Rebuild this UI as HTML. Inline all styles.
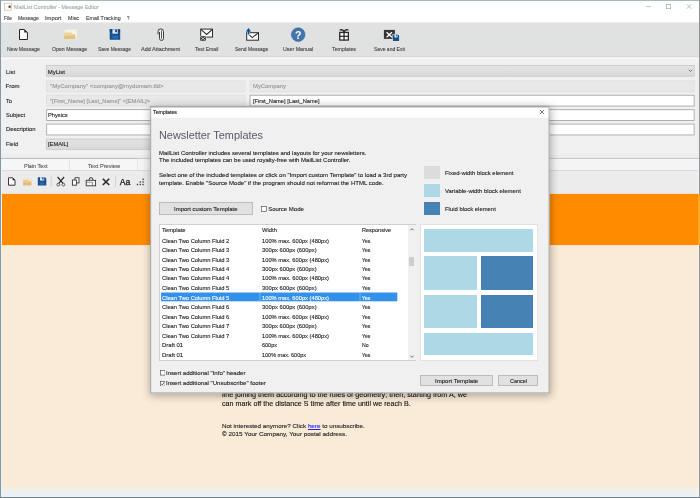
<!DOCTYPE html>
<html><head><meta charset="utf-8"><title>MailList Controller - Message Editor</title>
<style>
html,body{margin:0;padding:0}
body{width:700px;height:498px;overflow:hidden;background:#f0f0f0;font-family:"Liberation Sans",sans-serif}
#win{position:relative;width:700px;height:498px;overflow:hidden;background:#f0f0f0}
#win div,#win svg{position:absolute}
.ov{left:0;top:0;width:700px;height:498px;will-change:transform}
.t{-webkit-text-stroke:0.12px currentColor;position:absolute;white-space:nowrap;transform-origin:0 50%;display:block}
.inp{background:#fff;border:1px solid #a9a9a9;box-sizing:border-box}
.dis{background:#e6e6e6;border:1px solid #dcdcdc;box-sizing:border-box}
.cmb{background:#dedede;border:1px solid #c4c4c4;box-sizing:border-box}
.btn{background:#e1e1e1;border:1px solid #bcbcbc;box-sizing:border-box}
.cb{background:#fff;border:0.6px solid #444;box-sizing:border-box}
</style></head><body>
<div id="win">
<!-- backgrounds -->
<svg style="left:0;top:0" width="700" height="498" viewBox="0 0 700 498">
<rect x="0" y="0" width="700" height="22.6" fill="#fff"/>
<rect x="0" y="22.6" width="700" height="34.2" fill="#e0e1e1"/>
<rect x="0" y="56.6" width="700" height="0.8" fill="#cbcccc"/>
<rect x="0" y="57.4" width="700" height="1.4" fill="#f7f7f7"/>
<rect x="0" y="155.2" width="700" height="0.6" fill="#e7e7e7"/>
<rect x="0" y="157.9" width="700" height="0.9" fill="#a2a2a2"/>
<rect x="0" y="158.8" width="700" height="11.2" fill="#f5f6f8"/>
<rect x="137.3" y="158.8" width="562.7" height="11.2" fill="#f3f4f5"/>
<rect x="69" y="159" width="0.7" height="11" fill="#dcdcdc"/>
<rect x="137" y="159" width="0.7" height="11" fill="#dcdcdc"/>
<rect x="0" y="170" width="700" height="0.8" fill="#d3d3d3"/>
<rect x="0" y="170.8" width="700" height="23.4" fill="#ececed"/>
<rect x="0" y="193.9" width="700" height="51.4" fill="#ff8c00"/>
<rect x="0" y="245.3" width="700" height="243.6" fill="#faebd7"/>
<rect x="0" y="488.9" width="700" height="9.1" fill="#eef1f1"/>
</svg>
<!-- form fields -->
<svg style="left:0;top:0" width="700" height="160" viewBox="0 0 700 160">
<defs><linearGradient id="cg" x1="0" y1="0" x2="0" y2="1"><stop offset="0" stop-color="#e3e3e3"/><stop offset="1" stop-color="#d9d9d9"/></linearGradient></defs>
<rect x="46.60" y="65.40" width="647.60" height="10.80" fill="url(#cg)" stroke="#c6c6c6" stroke-width="0.8"/>
<rect x="46.60" y="80.80" width="198.40" height="11.00" fill="#e8e8e8" stroke="#dedede" stroke-width="0.8"/>
<rect x="250.00" y="80.80" width="444.20" height="11.00" fill="#e8e8e8" stroke="#dedede" stroke-width="0.8"/>
<rect x="46.60" y="95.20" width="198.40" height="10.90" fill="#e8e8e8" stroke="#dedede" stroke-width="0.8"/>
<rect x="250.05" y="95.25" width="444.10" height="10.80" fill="#fff" stroke="#a8a8a8" stroke-width="0.9"/>
<rect x="46.65" y="109.65" width="647.50" height="10.80" fill="#fff" stroke="#a8a8a8" stroke-width="0.9"/>
<rect x="46.65" y="124.05" width="647.50" height="10.90" fill="#fff" stroke="#a8a8a8" stroke-width="0.9"/>
<rect x="46.60" y="139.00" width="199.00" height="10.40" fill="url(#cg)" stroke="#c6c6c6" stroke-width="0.8"/>
<path d="M688.8 69.8 L690.5 71.5 L692.2 69.8" fill="none" stroke="#555" stroke-width="0.75"/>
</svg>
<div class="ov"><svg style="left:0;top:0" width="700" height="200" viewBox="0 0 700 200">
<!-- app icon -->
<rect x="4.3" y="3.2" width="7" height="7" fill="#fffdf6" stroke="#b9b3a6" stroke-width="0.6"/>
<rect x="8.6" y="5.6" width="2" height="2.2" fill="#4a2d12"/>
<!-- window controls -->
<path d="M646.2 6.6 H651" stroke="#9a9a9a" stroke-width="0.6"/>
<rect x="666.3" y="4.3" width="4.4" height="4.4" fill="none" stroke="#9a9a9a" stroke-width="0.6"/>
<path d="M686.7 4.2 L691.3 8.8 M691.3 4.2 L686.7 8.8" stroke="#9a9a9a" stroke-width="0.6"/>
<!-- New Message -->
<path d="M19.5 29.5 H24.3 L27.4 32.6 V39.5 H19.5 Z" fill="#fff" stroke="#222" stroke-width="1"/>
<path d="M24.3 29.3 L27.6 32.6 H24.3 Z" fill="#222"/>
<!-- Open Message -->
<path d="M64.2 31 L66 29.6 H77 V39 H64.2 Z" fill="#f6f2e8"/>
<path d="M64.2 32.6 H71 L72.5 34 H75.3 V39 H64.2 Z" fill="#ecd39a"/>
<rect x="64.2" y="35.8" width="11.1" height="3.2" fill="#e3c279"/>
<!-- Save Message -->
<path d="M109.7 29.3 H118.6 L120.2 30.9 V39.8 H109.7 Z" fill="#15508f"/>
<rect x="109.7" y="29.3" width="10.5" height="2" fill="#0f3a6b"/>
<rect x="112.4" y="29.3" width="5.4" height="4.4" fill="#d6e8fb"/>
<rect x="115.2" y="29.6" width="1.7" height="2.6" fill="#0f3a6b"/>
<rect x="112.2" y="35.6" width="6" height="3" fill="#2a69ad"/>
<!-- Add Attachment -->
<rect x="159.5" y="29.4" width="4" height="10.8" rx="2" fill="#f6f6f6"/>
<path d="M159.5 32 V38.4 A2 2 0 0 0 163.5 38.4 V31.4 A2.75 2.5 0 0 0 158 31.4 V34.3" fill="none" stroke="#333" stroke-width="0.95"/>
<path d="M161.5 30.9 V38.3" fill="none" stroke="#4a4a4a" stroke-width="0.95" stroke-linecap="round"/>
<!-- Test Email -->
<rect x="200.7" y="29.1" width="11.8" height="8" fill="#fff" stroke="#2a2a2a" stroke-width="1"/>
<path d="M200.9 29.3 L206.6 34.4 L212.3 29.3" fill="none" stroke="#2a2a2a" stroke-width="1.1"/>
<rect x="199.8" y="35.9" width="6.6" height="5.1" fill="#ededed"/>
<rect x="200.2" y="36.2" width="5.6" height="4.6" fill="#2a2a2a"/>
<path d="M200.6 36.7 L203 38.6 L205.4 36.7 M200.6 40.6 L203 38.4 L205.4 40.6" fill="none" stroke="#fff" stroke-width="0.7"/>
<!-- Send Message -->
<rect x="246.7" y="32.7" width="11.8" height="7.5" fill="#fff" stroke="#2a2a2a" stroke-width="1"/>
<path d="M246.9 32.9 L252.2 37.6 L258.3 32.9" fill="none" stroke="#2a2a2a" stroke-width="1.1"/>
<path d="M248.5 27.2 L252 31.8 H250 V35.2 H247 V31.8 H245 Z" fill="#cfe4f7"/>
<path d="M248.5 28.1 L251.1 31.5 H249.4 V34.6 H247.6 V31.5 H245.9 Z" fill="#154c80"/>
<!-- User Manual -->
<circle cx="298.2" cy="34.6" r="7.3" fill="#d3e0ef"/>
<circle cx="298.2" cy="34.6" r="6.8" fill="#4675ae" stroke="#3a6196" stroke-width="0.6"/>
<text x="298.2" y="38.5" text-anchor="middle" font-family="Liberation Sans, sans-serif" font-weight="bold" font-size="10.5" fill="#fff">?</text>
<!-- Templates -->
<rect x="339.75" y="32.45" width="8.6" height="7.6" fill="#fff" stroke="#2a2a2a" stroke-width="1.3"/>
<path d="M344.05 31.8 V40.6 M339.2 36.4 H348.9" stroke="#2a2a2a" stroke-width="1.3"/>
<path d="M343.9 31.6 C343.2 30.2 341.6 29.4 340.3 29.9 M344.2 31.6 C344.9 30.2 346.5 29.4 347.8 29.9" fill="none" stroke="#2a2a2a" stroke-width="1.5" stroke-linecap="round"/>
<!-- Save and Exit -->
<rect x="383.9" y="29.9" width="11" height="9" fill="#353535"/>
<path d="M386.6 32.2 L392 37.3 M392 32.2 L386.6 37.3" stroke="#fff" stroke-width="1.4"/>
<rect x="392.4" y="34" width="7" height="7.3" fill="#e6f0fa"/>
<path d="M392.9 34.4 H398 L399.1 35.5 V41 H392.9 Z" fill="#1a4f88"/>
<rect x="394.5" y="34.4" width="3" height="3" fill="#e8f2fc"/>
<rect x="396.1" y="34.6" width="0.9" height="1.8" fill="#1a4f88"/>
<!-- ===== toolbar 2 ===== -->
<path d="M8.5 177.8 H12.6 L15 180.2 V185.2 H8.5 Z" fill="#fff" stroke="#222" stroke-width="0.9"/>
<path d="M12.6 177.6 L15.2 180.2 H12.6 Z" fill="#222"/>
<path d="M23 179 L24.6 177.9 H32 V185.3 H23 Z" fill="#f1e6cf"/>
<path d="M23 180 H28 L29 181 H31.3 V185.3 H23 Z" fill="#e9cb93"/>
<rect x="23" y="182.7" width="8.3" height="2.6" fill="#e2bd7a"/>
<path d="M37.8 177.3 H45 L46.3 178.6 V185.6 H37.8 Z" fill="#15508f"/>
<rect x="40" y="177.3" width="4.2" height="3.3" fill="#d6e8fb"/>
<rect x="42.2" y="177.5" width="1.3" height="2" fill="#0f3a6b"/>
<rect x="39.8" y="182.3" width="4.6" height="2.4" fill="#2a69ad"/>
<rect x="50.8" y="176" width="0.7" height="11" fill="#c6c6c6"/>
<!-- cut -->
<path d="M57.6 177 L63 183.4 M64.1 177 L58.7 183.4" stroke="#2a2a2a" stroke-width="1.2"/>
<circle cx="58.3" cy="184.6" r="1.4" fill="none" stroke="#4a4a4a" stroke-width="0.9"/>
<circle cx="63.4" cy="184.6" r="1.4" fill="none" stroke="#4a4a4a" stroke-width="0.9"/>
<!-- copy -->
<rect x="75" y="177.7" width="4" height="5.2" fill="#fff" stroke="#333" stroke-width="0.9"/>
<rect x="72.4" y="180" width="4" height="5.2" fill="#fff" stroke="#333" stroke-width="0.9"/>
<!-- paste -->
<path d="M88.8 180.3 L89.8 177.8 H92.2 L93.2 180.3" fill="none" stroke="#333" stroke-width="0.9"/>
<rect x="86.2" y="180.3" width="9.4" height="5.5" fill="#f6f6f6" stroke="#333" stroke-width="0.9"/>
<path d="M86.2 182.3 H92.5 V185.8" fill="none" stroke="#555" stroke-width="0.6"/>
<!-- delete -->
<path d="M102.8 178.7 L109.2 185 M109.2 178.7 L102.8 185" stroke="#2a2a2a" stroke-width="1.6"/>
<rect x="115.1" y="176" width="0.7" height="11" fill="#c6c6c6"/>
<text x="119.8" y="184.8" font-family="Liberation Sans, sans-serif" font-size="8.8" fill="#111" stroke="#111" stroke-width="0.25" textLength="10.6" lengthAdjust="spacingAndGlyphs">Aa</text>
<!-- dotted icon -->
<g fill="#444"><rect x="136.8" y="183.8" width="1.4" height="1.4"/><rect x="139.6" y="183.8" width="1.4" height="1.4"/><rect x="139.6" y="181.2" width="1.4" height="1.4"/><rect x="142.4" y="183.8" width="1.4" height="1.4"/><rect x="142.4" y="181.2" width="1.4" height="1.4"/><rect x="142.4" y="178.6" width="1.4" height="1.4"/></g>
</svg>

<span class="t" id="t0" style="left:14px;top:2.80px;font-size:6px;line-height:9.2px;color:#a6a6a6;transform:scaleX(0.8911);">MailList Controller - Message Editor</span>
<span class="t" id="t1" style="left:4px;top:14.30px;font-size:6px;line-height:9.2px;color:#424242;transform:scaleX(0.8271);">File</span>
<span class="t" id="t2" style="left:18px;top:14.30px;font-size:6px;line-height:9.2px;color:#424242;transform:scaleX(0.8621);">Message</span>
<span class="t" id="t3" style="left:45px;top:14.30px;font-size:6px;line-height:9.2px;color:#424242;transform:scaleX(0.9697);">Import</span>
<span class="t" id="t4" style="left:68px;top:14.30px;font-size:6px;line-height:9.2px;color:#424242;transform:scaleX(0.8911);">Misc</span>
<span class="t" id="t5" style="left:85.8px;top:14.30px;font-size:6px;line-height:9.2px;color:#424242;transform:scaleX(0.8816);">Email Tracking</span>
<span class="t" id="t6" style="left:126.5px;top:14.30px;font-size:6px;line-height:9.2px;color:#424242;transform:scaleX(0.7477);">?</span>
<span class="t" id="t7" style="left:7px;top:45.40px;font-size:6px;line-height:9.2px;color:#424242;transform:scaleX(0.8681);">New Message</span>
<span class="t" id="t8" style="left:51.8px;top:45.40px;font-size:6px;line-height:9.2px;color:#424242;transform:scaleX(0.8648);">Open Message</span>
<span class="t" id="t9" style="left:98.3px;top:45.40px;font-size:6px;line-height:9.2px;color:#424242;transform:scaleX(0.8312);">Save Message</span>
<span class="t" id="t10" style="left:141px;top:45.40px;font-size:6px;line-height:9.2px;color:#424242;transform:scaleX(0.9204);">Add Attachment</span>
<span class="t" id="t11" style="left:194.6px;top:45.40px;font-size:6px;line-height:9.2px;color:#424242;transform:scaleX(0.8451);">Test Email</span>
<span class="t" id="t12" style="left:235.4px;top:45.40px;font-size:6px;line-height:9.2px;color:#424242;transform:scaleX(0.8294);">Send Message</span>
<span class="t" id="t13" style="left:283px;top:45.40px;font-size:6px;line-height:9.2px;color:#424242;transform:scaleX(0.8819);">User Manual</span>
<span class="t" id="t14" style="left:332px;top:45.40px;font-size:6px;line-height:9.2px;color:#424242;transform:scaleX(0.8772);">Templates</span>
<span class="t" id="t15" style="left:374px;top:45.40px;font-size:6px;line-height:9.2px;color:#424242;transform:scaleX(0.8371);">Save and Exit</span>
<span class="t" id="t16" style="left:5.5px;top:67.80px;font-size:6px;line-height:9.2px;color:#1c1c1c;transform:scaleX(0.9632);">List</span>
<span class="t" id="t17" style="left:5.5px;top:82.10px;font-size:6px;line-height:9.2px;color:#1c1c1c;">From</span>
<span class="t" id="t18" style="left:5.5px;top:96.50px;font-size:6px;line-height:9.2px;color:#1c1c1c;transform:scaleX(0.9458);">To</span>
<span class="t" id="t19" style="left:5.5px;top:110.90px;font-size:6px;line-height:9.2px;color:#1c1c1c;transform:scaleX(0.9493);">Subject</span>
<span class="t" id="t20" style="left:5.5px;top:125.40px;font-size:6px;line-height:9.2px;color:#1c1c1c;transform:scaleX(0.9828);">Description</span>
<span class="t" id="t21" style="left:5.5px;top:139.80px;font-size:6px;line-height:9.2px;color:#1c1c1c;transform:scaleX(0.9220);">Field</span>
<span class="t" id="t22" style="left:47.7px;top:67.80px;font-size:6px;line-height:9.2px;color:#1c1c1c;">MyList</span>
<span class="t" id="t23" style="left:49.5px;top:82.10px;font-size:6px;line-height:9.2px;color:#959595;transform:scaleX(1.0068);">"MyCompany" &lt;company@mydomain.tld&gt;</span>
<span class="t" id="t24" style="left:49.5px;top:96.50px;font-size:6px;line-height:9.2px;color:#959595;transform:scaleX(0.9588);">"[First_Name] [Last_Name]" &lt;[EMAIL]&gt;</span>
<span class="t" id="t25" style="left:47.9px;top:110.90px;font-size:6px;line-height:9.2px;color:#1c1c1c;transform:scaleX(0.9530);">Physics</span>
<span class="t" id="t26" style="left:47.7px;top:139.80px;font-size:6px;line-height:9.2px;color:#1c1c1c;transform:scaleX(0.9511);">[EMAIL]</span>
<span class="t" id="t27" style="left:253px;top:82.10px;font-size:6px;line-height:9.2px;color:#959595;transform:scaleX(0.9796);">MyCompany</span>
<span class="t" id="t28" style="left:253px;top:96.50px;font-size:6px;line-height:9.2px;color:#1c1c1c;transform:scaleX(0.9496);">[First_Name] [Last_Name]</span>
<span class="t" id="t29" style="left:24px;top:161.60px;font-size:6px;line-height:9.2px;color:#555;transform:scaleX(0.9071);">Plain Text</span>
<span class="t" id="t30" style="left:87.5px;top:161.60px;font-size:6px;line-height:9.2px;color:#555;transform:scaleX(0.9407);">Text Preview</span>
<span class="t" id="t31" style="left:222px;top:390.04px;font-size:7.1px;line-height:10.52px;color:#111;transform:scaleX(1.0169);">line joining them according to the rules of geometry; then, starting from A, we</span>
<span class="t" id="t32" style="left:222px;top:398.54px;font-size:7.1px;line-height:10.52px;color:#111;transform:scaleX(1.0088);">can mark off the distance S time after time until we reach B.</span>
<span class="t" id="t33" style="left:222px;top:421.45px;font-size:6.25px;line-height:9.5px;color:#222;transform:scaleX(1.0050);">Not interested anymore? Click <span style="color:#22e;text-decoration:underline">here</span> to unsubscribe.</span>
<span class="t" id="t34" style="left:222px;top:429.25px;font-size:6.25px;line-height:9.5px;color:#222;transform:scaleX(1.0192);">© 2015 Your Company, Your postal address.</span>
</div>
<!-- window borders -->
<div style="left:0;top:0;width:700px;height:1px;background:#adb6bb"></div>
<div style="left:0;top:159px;width:2.2px;height:339px;background:#eef3f5"></div><div style="left:0;top:0;width:1.2px;height:498px;background:#8598a4"></div>
<div style="left:698px;top:159px;width:1px;height:339px;background:#f4f6f7"></div><div style="left:698.9px;top:0;width:1.1px;height:498px;background:#8f9396"></div><div style="left:698px;top:194px;width:2px;height:51px;background:#ffa62e"></div>
<div style="left:0;top:497px;width:700px;height:1px;background:#6f7f8b"></div>
<!-- dialog -->
<div id="dlg" style="left:151px;top:107px;width:398px;height:286px;background:#f0f0f0;box-shadow:0 1px 8px 1.5px rgba(0,0,0,.30)"></div>
<svg style="left:140px;top:100px" width="420" height="300" viewBox="140 100 420 300">
<rect x="150.25" y="106.4" width="399.2" height="286.9" fill="#f0f0f0"/>
<rect x="150.25" y="106.4" width="399.2" height="11.4" fill="#fff"/>
<rect x="150.25" y="106.4" width="399.2" height="0.9" fill="#757575"/>
<rect x="150.25" y="106.4" width="0.9" height="286.9" fill="#9c9c9c"/>
<rect x="548.6" y="107.3" width="0.95" height="286" fill="#a2a2a2"/>
<rect x="150.25" y="392.4" width="399.3" height="0.9" fill="#a8a8a8"/>
</svg>
<svg style="left:539px;top:109.4px" width="6" height="6" viewBox="0 0 6 6"><path d="M0.9 0.9 L5.1 5.1 M5.1 0.9 L0.9 5.1" stroke="#333" stroke-width="0.65" fill="none"/></svg>
<!-- legend -->
<div style="left:424px;top:166px;width:16px;height:12.5px;background:#dcdcdc"></div>
<div style="left:424px;top:184px;width:16px;height:12.5px;background:#add8e6"></div>
<div style="left:424px;top:202px;width:16px;height:12.5px;background:#4682b4"></div>
<!-- import custom button + checkbox -->
<div class="btn" style="left:159.4px;top:202.3px;width:93.4px;height:12.6px"></div>
<svg style="left:261.3px;top:206.0px" width="5.6" height="5.6" viewBox="0 0 5.6 5.6"><rect x="0.3" y="0.3" width="5.0" height="5.0" fill="#fff" stroke="#3c3c3c" stroke-width="0.6"/></svg>
<!-- list -->
<div style="left:159.4px;top:224.4px;width:257px;height:136.2px;background:#fff;border:1px solid #d0d0d0;box-sizing:border-box"></div>
<svg style="left:160px;top:290px" width="240" height="14" viewBox="160 290 240 14"><rect x="161.1" y="292.5" width="236.2" height="8.8" fill="#3391ea"/><rect x="259.7" y="292.5" width="0.6" height="8.8" fill="#a5cef6"/><rect x="359.7" y="292.5" width="0.6" height="8.8" fill="#a5cef6"/></svg>
<div style="left:407.5px;top:225.4px;width:8px;height:134.2px;background:#f0f0f0"></div>
<div style="left:409px;top:257px;width:5px;height:9px;background:#cdcdcd"></div>
<svg style="left:408.5px;top:226.5px" width="6" height="5" viewBox="0 0 6 5"><path d="M1.4 3.3 L3 1.7 L4.6 3.3" fill="none" stroke="#444" stroke-width="0.75"/></svg>
<svg style="left:408.5px;top:353.5px" width="6" height="5" viewBox="0 0 6 5"><path d="M1.4 1.7 L3 3.3 L4.6 1.7" fill="none" stroke="#444" stroke-width="0.75"/></svg>
<!-- preview -->
<div style="left:420px;top:224.2px;width:118px;height:136.8px;background:#fff;border:1px solid #e2e2e2;box-sizing:border-box"></div>
<div style="left:424.4px;top:229px;width:108.6px;height:22.5px;background:#add8e6"></div>
<div style="left:424.4px;top:256px;width:52.2px;height:33.5px;background:#add8e6"></div>
<div style="left:481px;top:256px;width:52px;height:33.5px;background:#4682b4"></div>
<div style="left:424.4px;top:295px;width:52.2px;height:33.2px;background:#add8e6"></div>
<div style="left:481px;top:295px;width:52px;height:33.2px;background:#4682b4"></div>
<div style="left:424.4px;top:333.4px;width:108.6px;height:22px;background:#add8e6"></div>
<!-- bottom checkboxes -->
<svg style="left:159.6px;top:370.2px" width="5.4" height="5.4" viewBox="0 0 5.4 5.4"><rect x="0.3" y="0.3" width="4.800000000000001" height="4.800000000000001" fill="#fff" stroke="#3c3c3c" stroke-width="0.6"/></svg>
<svg style="left:159.6px;top:380.5px" width="5.4" height="5.4" viewBox="0 0 5.4 5.4"><rect x="0.3" y="0.3" width="4.800000000000001" height="4.800000000000001" fill="#fff" stroke="#3c3c3c" stroke-width="0.6"/></svg>
<svg style="left:159.6px;top:380.5px" width="5.4" height="5.4" viewBox="0 0 5.4 5.4"><path d="M1.2 2.7 L2.3 3.9 L4.3 1.3" fill="none" stroke="#222" stroke-width="0.7"/></svg>
<!-- buttons -->
<div class="btn" style="left:420px;top:375.4px;width:72.6px;height:10.4px"></div>
<div class="btn" style="left:498.2px;top:375.4px;width:39.6px;height:10.4px"></div>
<div class="ov"><span class="t" id="t35" style="left:152.6px;top:108.20px;font-size:6px;line-height:9.2px;color:#111;transform:scaleX(0.8772);">Templates</span>
<span class="t" id="t36" style="left:159.4px;top:126.74px;font-size:11.6px;line-height:15.92px;color:#585868;transform:scaleX(0.9401);-webkit-text-stroke:0;">Newsletter Templates</span>
<span class="t" id="t37" style="left:159px;top:149.20px;font-size:6px;line-height:9.2px;color:#1c1c1c;transform:scaleX(0.9950);">MailList Controller includes several templates and layouts for your newsletters.</span>
<span class="t" id="t38" style="left:159px;top:156.40px;font-size:6px;line-height:9.2px;color:#1c1c1c;">The included templates can be used royalty-free with MailList Controller.</span>
<span class="t" id="t39" style="left:159px;top:171.40px;font-size:6px;line-height:9.2px;color:#1c1c1c;transform:scaleX(1.0111);">Select one of the included templates or click on "Import custom Template" to load a 3rd party</span>
<span class="t" id="t40" style="left:159px;top:178.60px;font-size:6px;line-height:9.2px;color:#1c1c1c;transform:scaleX(1.0080);">template. Enable "Source Mode" if the program should not reformat the HTML code.</span>
<span class="t" id="t41" style="left:444.6px;top:169.40px;font-size:6px;line-height:9.2px;color:#1c1c1c;transform:scaleX(0.9859);">Fixed-width block element</span>
<span class="t" id="t42" style="left:444.6px;top:187.00px;font-size:6px;line-height:9.2px;color:#1c1c1c;transform:scaleX(0.9939);">Variable-width block element</span>
<span class="t" id="t43" style="left:444.6px;top:204.60px;font-size:6px;line-height:9.2px;color:#1c1c1c;transform:scaleX(0.9825);">Fluid block element</span>
<span class="t" id="t44" style="left:174px;top:204.80px;font-size:6px;line-height:9.2px;color:#1c1c1c;transform:scaleX(0.9950);">Import custom Template</span>
<span class="t" id="t45" style="left:268.2px;top:204.80px;font-size:6px;line-height:9.2px;color:#1c1c1c;">Source Mode</span>
<span class="t" id="t46" style="left:162.2px;top:226.20px;font-size:6px;line-height:9.2px;color:#1c1c1c;transform:scaleX(0.9688);">Template</span>
<span class="t" id="t47" style="left:262px;top:226.20px;font-size:6px;line-height:9.2px;color:#1c1c1c;transform:scaleX(0.9776);">Width</span>
<span class="t" id="t48" style="left:362px;top:226.20px;font-size:6px;line-height:9.2px;color:#1c1c1c;transform:scaleX(0.9248);">Responsive</span>
<span class="t" id="t49" style="left:162.2px;top:236.95px;font-size:6px;line-height:9.2px;color:#1c1c1c;transform:scaleX(0.9578);">Clean Two Column Fluid 2</span>
<span class="t" id="t50" style="left:262px;top:236.95px;font-size:6px;line-height:9.2px;color:#1c1c1c;transform:scaleX(0.9565);">100% max. 600px (480px)</span>
<span class="t" id="t51" style="left:362px;top:236.95px;font-size:6px;line-height:9.2px;color:#1c1c1c;transform:scaleX(0.8472);">Yes</span>
<span class="t" id="t52" style="left:162.2px;top:245.88px;font-size:6px;line-height:9.2px;color:#1c1c1c;transform:scaleX(0.9578);">Clean Two Column Fluid 3</span>
<span class="t" id="t53" style="left:262px;top:245.88px;font-size:6px;line-height:9.2px;color:#1c1c1c;transform:scaleX(0.9685);">300px 600px (600px)</span>
<span class="t" id="t54" style="left:362px;top:245.88px;font-size:6px;line-height:9.2px;color:#1c1c1c;transform:scaleX(0.8472);">Yes</span>
<span class="t" id="t55" style="left:162.2px;top:256.01px;font-size:6px;line-height:9.2px;color:#1c1c1c;transform:scaleX(0.9578);">Clean Two Column Fluid 3</span>
<span class="t" id="t56" style="left:262px;top:256.01px;font-size:6px;line-height:9.2px;color:#1c1c1c;transform:scaleX(0.9565);">100% max. 600px (480px)</span>
<span class="t" id="t57" style="left:362px;top:256.01px;font-size:6px;line-height:9.2px;color:#1c1c1c;transform:scaleX(0.8472);">Yes</span>
<span class="t" id="t58" style="left:162.2px;top:264.94px;font-size:6px;line-height:9.2px;color:#1c1c1c;transform:scaleX(0.9578);">Clean Two Column Fluid 4</span>
<span class="t" id="t59" style="left:262px;top:264.94px;font-size:6px;line-height:9.2px;color:#1c1c1c;transform:scaleX(0.9685);">300px 600px (600px)</span>
<span class="t" id="t60" style="left:362px;top:264.94px;font-size:6px;line-height:9.2px;color:#1c1c1c;transform:scaleX(0.8472);">Yes</span>
<span class="t" id="t61" style="left:162.2px;top:274.47px;font-size:6px;line-height:9.2px;color:#1c1c1c;transform:scaleX(0.9578);">Clean Two Column Fluid 4</span>
<span class="t" id="t62" style="left:262px;top:274.47px;font-size:6px;line-height:9.2px;color:#1c1c1c;transform:scaleX(0.9565);">100% max. 600px (480px)</span>
<span class="t" id="t63" style="left:362px;top:274.47px;font-size:6px;line-height:9.2px;color:#1c1c1c;transform:scaleX(0.8472);">Yes</span>
<span class="t" id="t64" style="left:162.2px;top:284.00px;font-size:6px;line-height:9.2px;color:#1c1c1c;transform:scaleX(0.9578);">Clean Two Column Fluid 5</span>
<span class="t" id="t65" style="left:262px;top:284.00px;font-size:6px;line-height:9.2px;color:#1c1c1c;transform:scaleX(0.9685);">300px 600px (600px)</span>
<span class="t" id="t66" style="left:362px;top:284.00px;font-size:6px;line-height:9.2px;color:#1c1c1c;transform:scaleX(0.8472);">Yes</span>
<span class="t" id="t67" style="left:162.2px;top:293.53px;font-size:6px;line-height:9.2px;color:#fff;transform:scaleX(0.9578);">Clean Two Column Fluid 5</span>
<span class="t" id="t68" style="left:262px;top:293.53px;font-size:6px;line-height:9.2px;color:#fff;transform:scaleX(0.9565);">100% max. 600px (480px)</span>
<span class="t" id="t69" style="left:362px;top:293.53px;font-size:6px;line-height:9.2px;color:#fff;transform:scaleX(0.8472);">Yes</span>
<span class="t" id="t70" style="left:162.2px;top:303.06px;font-size:6px;line-height:9.2px;color:#1c1c1c;transform:scaleX(0.9578);">Clean Two Column Fluid 6</span>
<span class="t" id="t71" style="left:262px;top:303.06px;font-size:6px;line-height:9.2px;color:#1c1c1c;transform:scaleX(0.9685);">300px 600px (600px)</span>
<span class="t" id="t72" style="left:362px;top:303.06px;font-size:6px;line-height:9.2px;color:#1c1c1c;transform:scaleX(0.8472);">Yes</span>
<span class="t" id="t73" style="left:162.2px;top:312.59px;font-size:6px;line-height:9.2px;color:#1c1c1c;transform:scaleX(0.9578);">Clean Two Column Fluid 6</span>
<span class="t" id="t74" style="left:262px;top:312.59px;font-size:6px;line-height:9.2px;color:#1c1c1c;transform:scaleX(0.9565);">100% max. 600px (480px)</span>
<span class="t" id="t75" style="left:362px;top:312.59px;font-size:6px;line-height:9.2px;color:#1c1c1c;transform:scaleX(0.8472);">Yes</span>
<span class="t" id="t76" style="left:162.2px;top:322.12px;font-size:6px;line-height:9.2px;color:#1c1c1c;transform:scaleX(0.9578);">Clean Two Column Fluid 7</span>
<span class="t" id="t77" style="left:262px;top:322.12px;font-size:6px;line-height:9.2px;color:#1c1c1c;transform:scaleX(0.9685);">300px 600px (600px)</span>
<span class="t" id="t78" style="left:362px;top:322.12px;font-size:6px;line-height:9.2px;color:#1c1c1c;transform:scaleX(0.8472);">Yes</span>
<span class="t" id="t79" style="left:162.2px;top:331.65px;font-size:6px;line-height:9.2px;color:#1c1c1c;transform:scaleX(0.9578);">Clean Two Column Fluid 7</span>
<span class="t" id="t80" style="left:262px;top:331.65px;font-size:6px;line-height:9.2px;color:#1c1c1c;transform:scaleX(0.9565);">100% max. 600px (480px)</span>
<span class="t" id="t81" style="left:362px;top:331.65px;font-size:6px;line-height:9.2px;color:#1c1c1c;transform:scaleX(0.8472);">Yes</span>
<span class="t" id="t82" style="left:162.2px;top:341.18px;font-size:6px;line-height:9.2px;color:#1c1c1c;transform:scaleX(0.9886);">Draft 01</span>
<span class="t" id="t83" style="left:262px;top:341.18px;font-size:6px;line-height:9.2px;color:#1c1c1c;transform:scaleX(0.9169);">600px</span>
<span class="t" id="t84" style="left:362px;top:341.18px;font-size:6px;line-height:9.2px;color:#1c1c1c;transform:scaleX(0.8603);">No</span>
<span class="t" id="t85" style="left:162.2px;top:350.71px;font-size:6px;line-height:9.2px;color:#1c1c1c;transform:scaleX(0.9886);">Draft 01</span>
<span class="t" id="t86" style="left:262px;top:350.71px;font-size:6px;line-height:9.2px;color:#1c1c1c;transform:scaleX(0.9161);">100% max. 600px</span>
<span class="t" id="t87" style="left:362px;top:350.71px;font-size:6px;line-height:9.2px;color:#1c1c1c;transform:scaleX(0.8472);">Yes</span>
<span class="t" id="t88" style="left:166.2px;top:369.00px;font-size:6px;line-height:9.2px;color:#1c1c1c;transform:scaleX(1.0107);">Insert additional "Info" header</span>
<span class="t" id="t89" style="left:166.2px;top:379.20px;font-size:6px;line-height:9.2px;color:#1c1c1c;transform:scaleX(1.0116);">Insert additional "Unsubscribe" footer</span>
<span class="t" id="t90" style="left:434.8px;top:376.50px;font-size:6px;line-height:9.2px;color:#1c1c1c;transform:scaleX(1.0065);">Import Template</span>
<span class="t" id="t91" style="left:509.5px;top:376.50px;font-size:6px;line-height:9.2px;color:#1c1c1c;transform:scaleX(0.9097);">Cancel</span>
</div>
</div>
</body></html>
